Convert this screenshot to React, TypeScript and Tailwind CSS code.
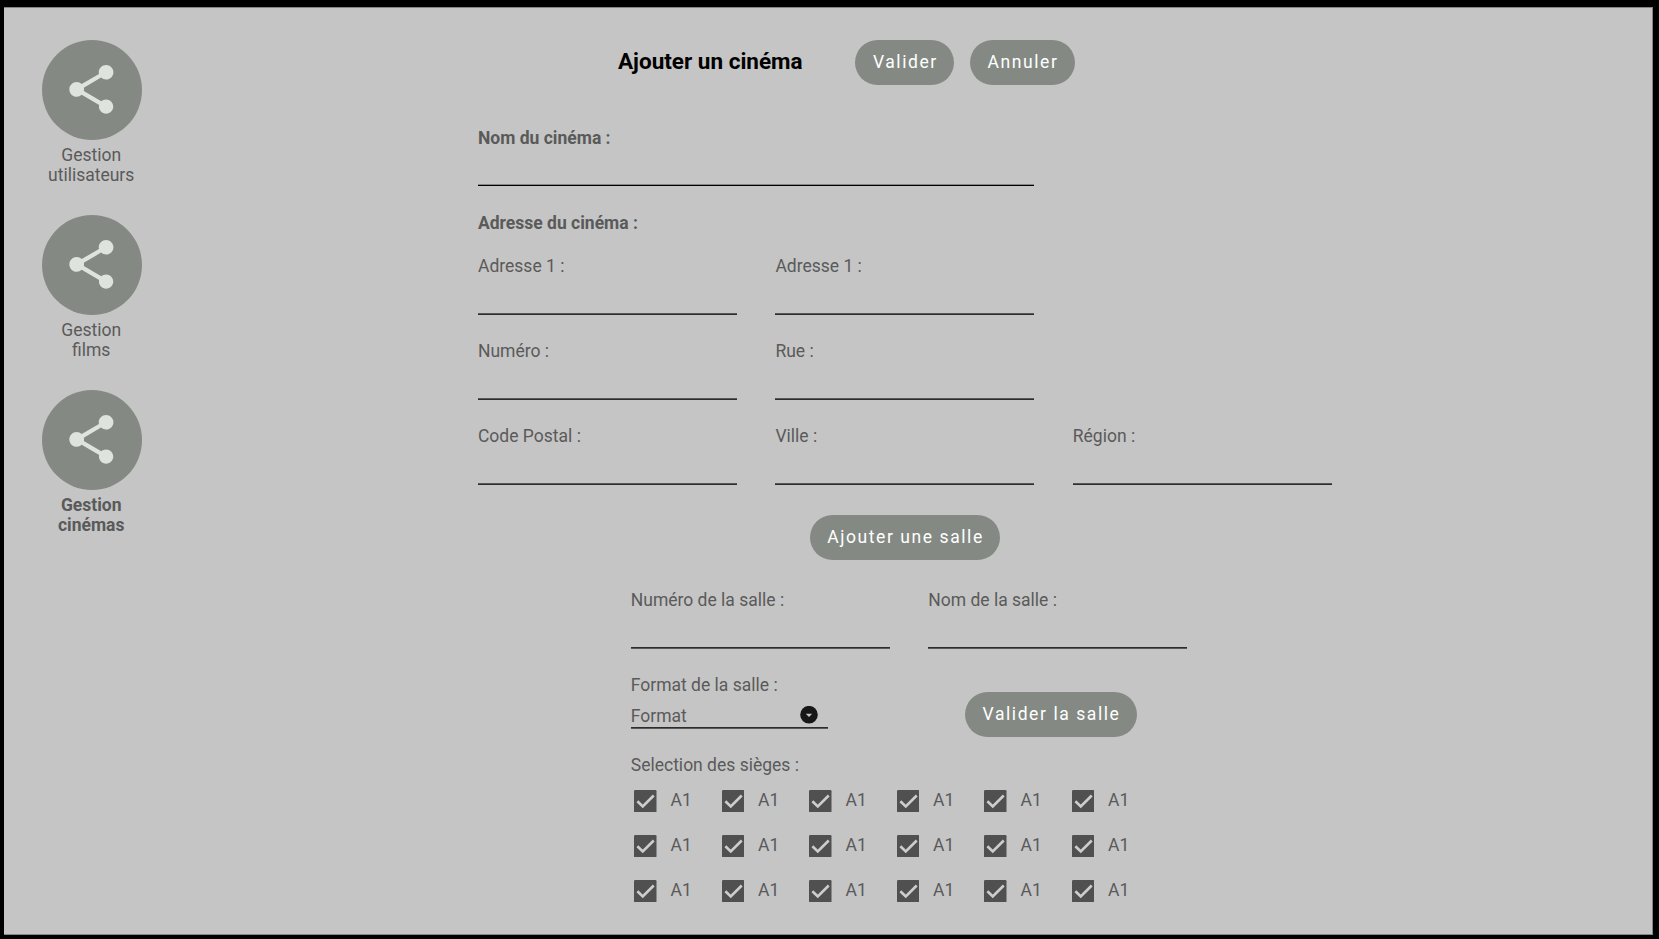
import React from "react";

function ShareIcon() {
  return (
    <svg viewBox="0 0 24 24" className="-mt-px -ml-[1.5px] size-[58.8px] fill-[#dfe3de]">
      <path d="M18 16.08c-.76 0-1.44.3-1.96.77L8.91 12.7c.05-.23.09-.46.09-.7s-.04-.47-.09-.7l7.05-4.11c.54.5 1.25.81 2.04.81 1.66 0 3-1.34 3-3s-1.34-3-3-3-3 1.34-3 3c0 .24.04.47.09.7L8.04 9.81C7.5 9.31 6.79 9 6 9c-1.66 0-3 1.34-3 3s1.34 3 3 3c.79 0 1.5-.31 2.04-.81l7.12 4.16c-.05.21-.08.43-.08.65 0 1.61 1.31 2.92 2.92 2.92 1.61 0 2.92-1.31 2.92-2.92s-1.31-2.92-2.92-2.92z" />
    </svg>
  );
}

function NavItem({ lines, active = false }: { lines: [string, string]; active?: boolean }) {
  return (
    <a className="flex h-[175px] w-[100px] flex-col items-center">
      <span className="flex size-[100px] shrink-0 items-center justify-center rounded-full bg-[#848a83]">
        <ShareIcon />
      </span>
      <span className={active ? "mt-[5px] -ml-px text-center font-bold" : "mt-[5px] -ml-px text-center"}>
        {lines[0]}
        <br />
        {lines[1]}
      </span>
    </a>
  );
}

function Button({ children, width }: { children: string; width: string }) {
  return (
    <button
      className={`${width} h-[45px] shrink-0 rounded-full bg-[#848a83] pl-px text-center tracking-[1.575px] whitespace-nowrap text-white`}
    >
      {children}
    </button>
  );
}

function Field({ label, tone = "address" }: { label: string; tone?: "name" | "address" | "room" }) {
  const lineTones = {
    name: "border-[#858585] bg-black",
    address: "border-[#585858] bg-[#2d2d2d]",
    room: "border-[#2d2d2d] bg-[#585858]",
  };
  return (
    <label
      className={
        tone === "name"
          ? "flex h-[59px] w-[556px] flex-col justify-between pt-px font-bold"
          : "flex h-[59px] w-[259px] flex-col justify-between"
      }
    >
      {label}
      <span className={`h-[2px] border-t ${lineTones[tone]}`} />
    </label>
  );
}

function Seat() {
  return (
    <label className="flex w-[87.5px] items-center">
      <svg viewBox="0 0 18 18" className="size-[22.5px] shrink-0">
        <rect width="18" height="18" rx="1" fill="#505050" />
        <path d="M2.7 9 7 13.2 15.8 4.4" fill="none" stroke="#cdcdcd" strokeWidth="2.1" />
      </svg>
      <span className="-mt-[3px] ml-[13.5px]">A1</span>
    </label>
  );
}

export default function App() {
  return (
    <div className="h-[939px] w-[1659px] overflow-hidden bg-black pt-[7px] pl-[4px] font-[Roboto,sans-serif] text-[17.5px] leading-[20px] text-[#5a5a5a]">
      <div className="flex h-[928px] w-[1649px] border-t border-r border-b border-[#858585] bg-[#c5c5c5]">
        <nav className="ml-[37.7px] w-[100.3px] shrink-0 pt-[31.7px]">
          <NavItem lines={["Gestion", "utilisateurs"]} />
          <NavItem lines={["Gestion", "films"]} />
          <NavItem lines={["Gestion", "cinémas"]} active />
        </nav>

        <main className="ml-[336px] pt-[31.6px]">
          <header className="flex items-center pl-[140px]">
            <h1 className="w-[237.4px] pb-[3px] text-[22.5px] leading-[28px] font-bold text-black">Ajouter un cinéma</h1>
            <Button width="w-[99px]">Valider</Button>
            <span className="w-[15.6px]" />
            <Button width="w-[105px]">Annuler</Button>
          </header>

          <section className="mt-[42.4px]">
            <Field label="Nom du cinéma :" tone="name" />
            <h2 className="mt-[27px] font-bold">Adresse du cinéma :</h2>
            <div className="mt-[23px] grid grid-cols-[259px_259px_259px] gap-x-[38.4px] gap-y-[26px]">
              <Field label="Adresse 1 :" />
              <Field label="Adresse 1 :" />
              <span />
              <Field label="Numéro :" />
              <Field label="Rue :" />
              <span />
              <Field label="Code Postal :" />
              <Field label="Ville :" />
              <Field label="Région :" />
            </div>
          </section>

          <div className="mt-[29.6px] pl-[332px]">
            <Button width="w-[190px]">Ajouter une salle</Button>
          </div>

          <section className="mt-[30.4px] pl-[152.8px]">
            <div className="flex gap-[38.5px]">
              <Field label="Numéro de la salle :" tone="room" />
              <Field label="Nom de la salle :" tone="room" />
            </div>
            <div className="mt-[26px] flex h-[54px]">
              <div className="w-[197.2px]">
                <p>Format de la salle :</p>
                <div className="mt-[11px] flex h-[21px] justify-between pr-[10px]">
                  Format
                  <svg viewBox="0 0 18 18" className="size-[18px]">
                    <circle cx="9" cy="8.7" r="8.8" fill="#171717" />
                    <path d="M5.8 7.8h6.4L9 11z" fill="#c5c5c5" />
                  </svg>
                </div>
                <div className="h-[2px] border-t border-[#2d2d2d] bg-[#585858]" />
              </div>
              <div className="mt-[16.6px] ml-[137.3px]">
                <Button width="w-[171.5px]">Valider la salle</Button>
              </div>
            </div>
            <p className="mt-[26px]">Selection des sièges :</p>
            <div className="mt-[15px] ml-[3.7px] grid grid-cols-[repeat(6,87.5px)] gap-y-[22.5px]">
              {Array.from({ length: 18 }, (_, i) => (
                <Seat key={i} />
              ))}
            </div>
          </section>
        </main>
      </div>
    </div>
  );
}
